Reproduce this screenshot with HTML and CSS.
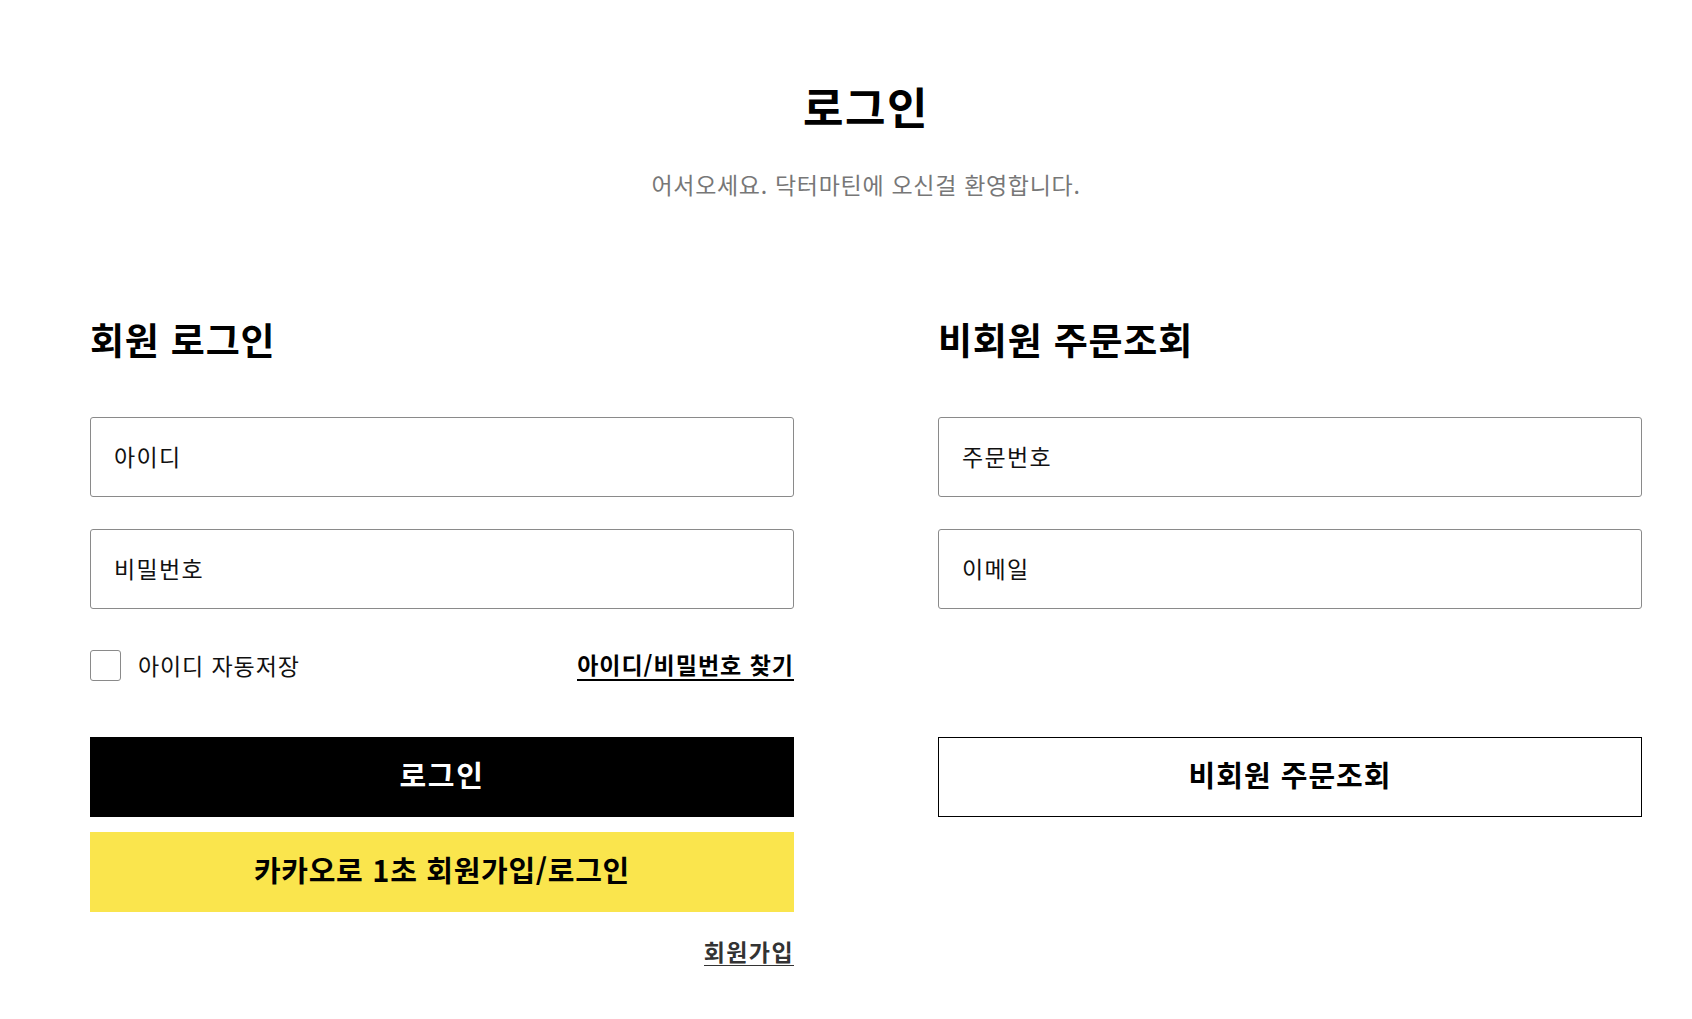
FILE: index.html
```html
<!DOCTYPE html>
<html lang="ko">
<head>
<meta charset="utf-8">
<title>로그인</title>
<link rel="stylesheet" href="styles.css">
</head>
<body>
<div class="page">
  <div class="container">
    <header class="intro">
      <h1 class="title">로그인</h1>
      <p class="subtitle">어서오세요. 닥터마틴에 오신걸 환영합니다.</p>
    </header>
    <div class="columns">
      <section class="col">
        <h2 class="col-title">회원 로그인</h2>
        <div class="fields">
          <input class="field" type="text" placeholder="아이디">
          <input class="field" type="password" placeholder="비밀번호">
        </div>
        <div class="options">
          <label class="check">
            <span class="box"></span>
            <span class="check-label">아이디 자동저장</span>
          </label>
          <a class="find" href="#">아이디/비밀번호 찾기</a>
        </div>
        <div class="buttons">
          <button class="btn btn-black">로그인</button>
          <button class="btn btn-kakao">카카오로 1초 회원가입/로그인</button>
        </div>
        <div class="join-row">
          <a class="join" href="#">회원가입</a>
        </div>
      </section>
      <section class="col">
        <h2 class="col-title">비회원 주문조회</h2>
        <div class="fields">
          <input class="field" type="text" placeholder="주문번호">
          <input class="field" type="text" placeholder="이메일">
        </div>
        <div class="options options-empty"></div>
        <div class="buttons">
          <button class="btn btn-outline">비회원 주문조회</button>
        </div>
      </section>
    </div>
  </div>
</div>
</body>
</html>
```

FILE: styles.css
```css
* { box-sizing: border-box; }

html, body {
  margin: 0;
  padding: 0;
  background: #fff;
}

body {
  font-family: "Noto Sans CJK KR", "Noto Sans", sans-serif;
  color: #000;
}

.page {
  padding-left: 40px;
}

.container {
  width: 1552px;
  margin: 0 auto;
}

.intro {
  text-align: center;
  padding-top: 81px;
}

.title {
  margin: 0;
  font-size: 44px;
  line-height: 50px;
  font-weight: 700;
  letter-spacing: 1.5px;
}

.subtitle {
  margin: 38px 0 0;
  font-size: 23px;
  line-height: 30px;
  color: #777;
  letter-spacing: 0.7px;
}

.columns {
  display: grid;
  grid-template-columns: 704px 704px;
  column-gap: 144px;
  margin-top: 118px;
}

.col-title {
  margin: 0;
  font-size: 37px;
  line-height: 44px;
  font-weight: 700;
  letter-spacing: 0.8px;
}

.fields {
  display: flex;
  flex-direction: column;
  gap: 32px;
  margin-top: 56px;
}

.field {
  display: block;
  width: 100%;
  height: 80px;
  border: 1px solid #8a8a8a;
  border-radius: 3px;
  padding: 0 23px 2px;
  font-family: inherit;
  font-size: 23px;
  letter-spacing: 1.3px;
  color: #111;
  outline: none;
  background: #fff;
}

.field::placeholder {
  color: #111;
}

.options {
  display: flex;
  align-items: center;
  justify-content: space-between;
  height: 32px;
  margin-top: 40px;
}

.check {
  display: flex;
  align-items: center;
  gap: 17px;
  cursor: pointer;
}

.box {
  width: 31px;
  height: 31px;
  border: 1px solid #8a8a8a;
  border-radius: 3px;
  background: #fff;
}

.check-label {
  font-size: 23px;
  line-height: 30px;
  color: #111;
  letter-spacing: 0.9px;
}

.find {
  font-size: 23px;
  line-height: 30px;
  font-weight: 700;
  color: #000;
  text-decoration: none;
  border-bottom: 2px solid #000;
  letter-spacing: 1px;
}

.buttons {
  display: flex;
  flex-direction: column;
  gap: 15px;
  margin-top: 56px;
}

.btn {
  display: block;
  width: 100%;
  height: 80px;
  border: 0;
  border-radius: 0;
  padding: 0 0 6px;
  font-family: inherit;
  font-size: 29px;
  font-weight: 700;
  letter-spacing: 1px;
  cursor: pointer;
}

.btn-black {
  background: #000;
  color: #fff;
  letter-spacing: 1.6px;
}

.btn-kakao {
  background: #fae54d;
  color: #000;
  letter-spacing: 0.7px;
}

.btn-outline {
  background: #fff;
  color: #000;
  border: 1px solid #000;
}

.join-row {
  display: flex;
  justify-content: flex-end;
  margin-top: 25px;
}

.join {
  font-size: 23px;
  line-height: 28px;
  font-weight: 700;
  color: #333;
  text-decoration: none;
  border-bottom: 1px solid #333;
  letter-spacing: 1.4px;
}
```
